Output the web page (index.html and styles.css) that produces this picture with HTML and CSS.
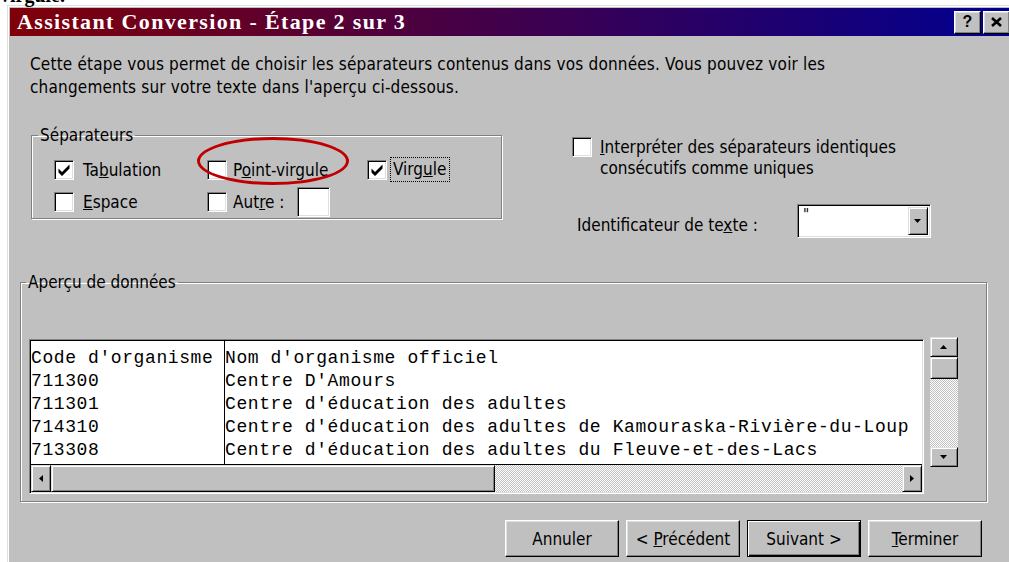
FILE: index.html
```html
<!DOCTYPE html>
<html lang="fr">
<head>
<meta charset="utf-8">
<title>Assistant Conversion</title>
<link rel="stylesheet" href="styles.css">
</head>
<body>
<p class="doc-line">virgule.</p>
<div class="window">
  <div class="titlebar">
    <span class="title">Assistant Conversion - Étape 2 sur 3</span>
    <div class="title-buttons">
      <span class="tbtn">?</span>
      <span class="tbtn"><svg width="11" height="10" viewBox="0 0 11 10"><path d="M1 1 L10 9 M10 1 L1 9" stroke="#000" stroke-width="2.6"/></svg></span>
    </div>
  </div>
  <div class="client">
    <p class="intro">Cette étape vous permet de choisir les séparateurs contenus dans vos données. Vous pouvez voir les<br>changements sur votre texte dans l'aperçu ci-dessous.</p>

    <div class="options">
      <fieldset class="group sep-group">
        <legend>Séparateurs</legend>
        <div class="sep-grid">
          <label class="check">
            <span class="box"><svg class="tick" viewBox="0 0 14 14"><path d="M1.5 5.5 L5 9 L12.5 1.5 L12.5 5.5 L5 13 L1.5 9.5 Z"/></svg></span>
            <span>Ta<u>b</u>ulation</span>
          </label>
          <label class="check check-tight">
            <span class="box"></span>
            <span>P<u>o</u>int-virgule</span>
          </label>
          <label class="check check-tight">
            <span class="box"><svg class="tick" viewBox="0 0 14 14"><path d="M1.5 5.5 L5 9 L12.5 1.5 L12.5 5.5 L5 13 L1.5 9.5 Z"/></svg></span>
            <span class="focus">Virg<u>u</u>le</span>
          </label>
          <label class="check">
            <span class="box"></span>
            <span><u>E</u>space</span>
          </label>
          <div class="check check-tight">
            <span class="box"></span>
            <span>Aut<u>r</u>e :</span>
            <span class="field other"></span>
          </div>
          <span class="annotation"></span>
        </div>
      </fieldset>

      <div class="side">
        <label class="check multi">
          <span class="box"></span>
          <span><u>I</u>nterpréter des séparateurs identiques<br>consécutifs comme uniques</span>
        </label>
        <div class="qualifier">
          <span class="qualifier-label">Identificateur de te<u>x</u>te :</span>
          <div class="combo">
            <span class="combo-value">"</span>
            <span class="raised combo-btn"><svg width="8" height="5" viewBox="0 0 8 5"><path d="M0 0 H7 L3.5 4 Z"/></svg></span>
          </div>
        </div>
      </div>
    </div>

    <fieldset class="group preview-group">
      <legend>Aperçu de données</legend>
      <div class="preview-wrap">
        <div class="preview">
          <div class="data">
            <div class="col col-code">Code d'organisme
711300
711301
714310
713308</div>
            <div class="col">Nom d'organisme officiel
Centre D'Amours
Centre d'éducation des adultes
Centre d'éducation des adultes de Kamouraska-Rivière-du-Loup
Centre d'éducation des adultes du Fleuve-et-des-Lacs</div>
          </div>
          <div class="hscroll">
            <span class="raised sbtn-h"><svg width="5" height="8" viewBox="0 0 5 8"><path d="M4 0 V7 L0 3.5 Z"/></svg></span>
            <span class="raised hthumb"></span>
            <span class="track"></span>
            <span class="raised sbtn-h"><svg width="5" height="8" viewBox="0 0 5 8"><path d="M0 0 V7 L4 3.5 Z"/></svg></span>
          </div>
        </div>
        <div class="vscroll">
          <span class="raised sbtn-v"><svg width="8" height="5" viewBox="0 0 8 5"><path d="M0 4 H7 L3.5 0 Z"/></svg></span>
          <span class="raised vthumb"></span>
          <span class="track"></span>
          <span class="raised sbtn-v"><svg width="8" height="5" viewBox="0 0 8 5"><path d="M0 0 H7 L3.5 4 Z"/></svg></span>
        </div>
      </div>
    </fieldset>

    <div class="actions">
      <span class="btn"><span>Annuler</span></span>
      <span class="btn"><span>&lt; <u>P</u>récédent</span></span>
      <span class="btn btn-default"><span>Suivant &gt;</span></span>
      <span class="btn"><span><u>T</u>erminer</span></span>
    </div>
  </div>
</div>
</body>
</html>
```

FILE: styles.css
```css
html, body {
  margin: 0;
  padding: 0;
  background: #fff;
  overflow: hidden;
}

body {
  font-family: "DejaVu Sans Condensed", "DejaVu Sans", sans-serif;
  color: #000;
}

/* last line of the surrounding document, mostly scrolled away */
.doc-line {
  margin: -15px 0 0 0;
  height: 20px;
  font: bold 20px/20px "Liberation Serif", serif;
}

/* dialog frame */
.window {
  width: 1006px;
  height: 570px;
  margin-left: 7px;
  box-sizing: border-box;
  background: #c0c0c0;
  border: 1px solid;
  border-color: #dfdfdf #000 #000 #dfdfdf;
  box-shadow: inset 1px 1px #fff, inset -1px -1px #808080;
  padding: 2px;
}

.titlebar {
  height: 28px;
  display: flex;
  align-items: center;
  padding-left: 7px;
  background: linear-gradient(to right, #800008, #000090);
  color: #fff;
}

.title {
  font: bold 22px/1 "Liberation Serif", serif;
  letter-spacing: 1.35px;
}

.title-buttons {
  margin-left: auto;
  display: flex;
  gap: 2px;
}

.tbtn {
  width: 27px;
  height: 23px;
  box-sizing: border-box;
  display: flex;
  align-items: center;
  justify-content: center;
  background: #c0c0c0;
  border: 1px solid;
  border-color: #fff #000 #000 #fff;
  box-shadow: inset -1px -1px #808080, inset 1px 1px #dfdfdf;
  color: #000;
  font: bold 16px/1 "Liberation Sans", sans-serif;
}

/* generic raised 3D face */
.raised {
  box-sizing: border-box;
  background: #c0c0c0;
  border: 1px solid;
  border-color: #dfdfdf #000 #000 #dfdfdf;
  box-shadow: inset 1px 1px #fff, inset -1px -1px #808080;
  display: flex;
  align-items: center;
  justify-content: center;
}

.client {
  padding: 0 23px 0 10px;
  font-size: 17px;
}

.intro {
  margin: 17px 0 0 10px;
  line-height: 23px;
  letter-spacing: 0.18px;
}

.options {
  display: flex;
  align-items: flex-start;
  margin-top: 26px;
}

/* etched group box */
.group {
  margin: 0;
  padding: 0;
  min-width: 0;
  box-sizing: border-box;
  border: 1px solid #808080;
  box-shadow: inset 1px 1px #fff, 1px 1px #fff;
}

.group legend {
  padding: 0 2px;
  margin-left: 6px;
  line-height: 20px;
}

.sep-group {
  width: 471px;
  margin-left: 11px;
}

.sep-grid {
  position: relative;
  display: grid;
  grid-template-columns: 153px 160px auto;
  grid-template-rows: 25px 30px;
  row-gap: 5px;
  align-items: center;
  padding: 12px 0 1px 22px;
}

.check {
  display: flex;
  align-items: center;
  gap: 9px;
  white-space: nowrap;
}

.check-tight {
  gap: 6px;
}

.box {
  flex: none;
  width: 20px;
  height: 20px;
  box-sizing: border-box;
  background: #fff;
  border: 1px solid;
  border-color: #808080 #fff #fff #808080;
  box-shadow: inset 1px 1px #000, inset -1px -1px #dfdfdf;
  display: flex;
  align-items: center;
  justify-content: center;
}

.tick {
  width: 14px;
  height: 14px;
  fill: #000;
}

.focus {
  outline: 1px dotted #000;
  padding: 1px 3px 2px 2px;
  margin-left: -2px;
}

.field {
  box-sizing: border-box;
  background: #fff;
  border: 1px solid;
  border-color: #808080 #fff #fff #808080;
  box-shadow: inset 1px 1px #000, inset -1px -1px #dfdfdf;
}

.other {
  width: 33px;
  height: 30px;
  margin-left: 6px;
}

/* hand-drawn ring around the option */
.annotation {
  position: absolute;
  left: 165px;
  top: -8px;
  width: 152px;
  height: 48px;
  box-sizing: border-box;
  border: 3px solid #c00000;
  border-radius: 50%;
  pointer-events: none;
}

.side {
  margin-left: 70px;
  width: 359px;
  padding-top: 12px;
}

.multi {
  align-items: flex-start;
  gap: 8px;
  line-height: 21px;
}

.qualifier {
  display: flex;
  align-items: center;
  justify-content: space-between;
  margin: 25px 0 0 5px;
}

.qualifier-label {
  padding-top: 8px;
}

.combo {
  width: 134px;
  height: 34px;
  box-sizing: border-box;
  display: flex;
  background: #fff;
  border: 1px solid;
  border-color: #808080 #fff #fff #808080;
  box-shadow: inset 1px 1px #000, inset -1px -1px #dfdfdf;
  padding: 2px;
}

.combo-value {
  padding-left: 3px;
  line-height: 16px;
  font-size: 15px;
}

.combo-btn {
  margin-left: auto;
  width: 20px;
}

.preview-group {
  margin-top: 34px;
}

.preview-group legend {
  margin-left: 5px;
}

.preview-wrap {
  display: flex;
  align-items: flex-start;
  gap: 6px;
  padding: 45px 0 7px 8px;
}

.preview {
  width: 895px;
  height: 155px;
  margin-top: 2px;
  box-sizing: border-box;
  display: flex;
  flex-direction: column;
  border: 1px solid;
  border-color: #808080 #fff #fff #808080;
  box-shadow: inset 1px 1px #000, inset -1px -1px #dfdfdf;
  padding: 1px;
}

.data {
  height: 124px;
  flex: none;
  box-sizing: border-box;
  display: flex;
  overflow: hidden;
  background: #fff;
  border-bottom: 1px solid #000;
  font: 18px/23px "Liberation Mono", monospace;
  letter-spacing: 0.6px;
  white-space: pre;
}

.col {
  padding-top: 6px;
}

.col-code {
  flex: none;
  width: 194px;
  box-sizing: border-box;
  border-right: 1px solid #000;
}

.hscroll {
  flex: 1;
  display: flex;
}

.sbtn-h {
  width: 20px;
  flex: none;
}

.hthumb {
  width: 444px;
  flex: none;
}

.track {
  flex: 1;
  background: repeating-conic-gradient(#c0c0c0 0% 25%, #fff 0% 50%) 0 0 / 2px 2px;
}

.vscroll {
  width: 28px;
  height: 130px;
  display: flex;
  flex-direction: column;
}

.sbtn-v {
  height: 20px;
  flex: none;
}

.vthumb {
  height: 22px;
  flex: none;
}

.actions {
  display: flex;
  justify-content: flex-end;
  gap: 7px;
  margin-top: 18px;
  padding-right: 5px;
}

.btn {
  width: 114px;
  height: 37px;
  box-sizing: border-box;
  display: flex;
  align-items: center;
  justify-content: center;
  background: #c0c0c0;
  border: 1px solid;
  border-color: #fff #000 #000 #fff;
  box-shadow: inset -1px -1px #808080, inset 1px 1px #dfdfdf;
}

.btn-default {
  border-color: #000;
  box-shadow: inset 1px 1px #fff, inset -1px -1px #000, inset -2px -2px #808080;
}
```
